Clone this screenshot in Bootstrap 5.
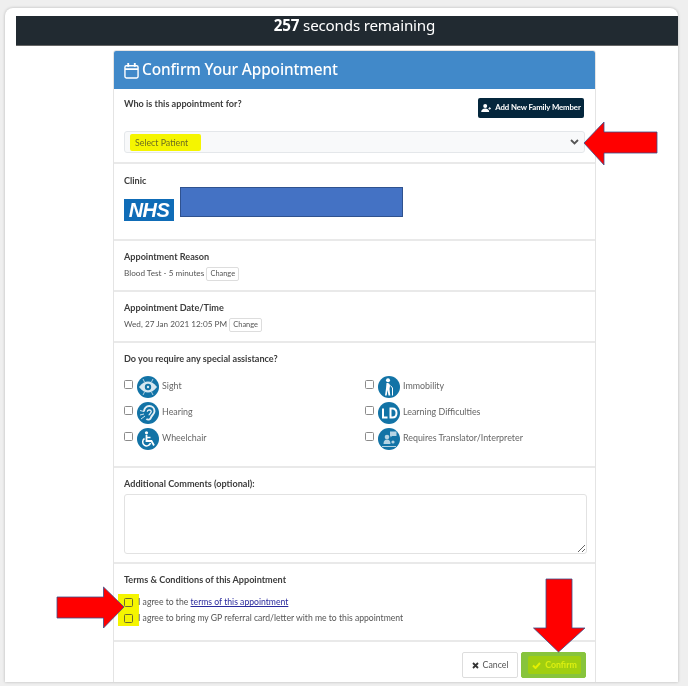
<!DOCTYPE html>
<html lang="en">
<head>
<meta charset="utf-8">
<title>Confirm Your Appointment</title>
<link href="https://cdn.jsdelivr.net/npm/bootstrap@5.3.0/dist/css/bootstrap.min.css" rel="stylesheet">
<style>
html,body{height:686px;overflow:hidden}
body{background:#efefef;font-family:Lato,"Open Sans",sans-serif;font-size:9px;color:#555;position:relative}
.shot-window{position:absolute;left:5px;top:8px;right:10px;height:674px;background:#fff;border-radius:8px 8px 0 0;box-shadow:0 0 3px rgba(0,0,0,.25);padding:8px 0 0 11px;overflow:hidden;filter:blur(.35px)}
.timer-bar{height:30px;background:#212a31;color:#fff;font-family:"Noto Sans",sans-serif;font-size:15.2px;line-height:18px;letter-spacing:-.2px;border-bottom:1px solid #666;padding-left:15px}
.appt-card{width:483px;margin:4px 0 0 97px;border:1px solid #e4e4e4;border-radius:3px 3px 0 0;overflow:visible}
.appt-head{height:38px;background:#4189c9;color:#fff;font-family:"Noto Sans",sans-serif;font-size:15.4px;font-weight:500;letter-spacing:-.12px;border-radius:2px 2px 0 0;padding:0 10px;gap:3px}
.sect{border-bottom:2px solid #e9e9e9;padding:9px 10px 0;position:relative}
.s-who{height:75px;padding-right:11px}.s-clinic{height:77px;padding-top:11px}.s-reason{height:51px;padding-top:10px}.s-date{height:51px;padding-top:10px}.s-help{height:125px;padding-top:10px}.s-notes{height:96px;padding-top:10px}.s-terms{height:78px;padding-top:10px}.s-foot{height:42px;border:0;padding:10px 9px 0;gap:3px}
.sect-label{font-weight:700;color:#3c3c3c;line-height:12px;font-size:9.1px}
.add-btn{height:20px;width:106px;padding:0;background:#04263c;color:#fff;font-size:7.8px;font-weight:700;border-radius:2px;letter-spacing:-.1px;white-space:nowrap}
.add-btn svg{width:10px;height:8px}
.pick-patient{height:22px;margin:13px -1px 0 0;background:#f8f9fa;border:1px solid #e4e7ea;border-radius:3px;padding:0 5px;color:#6d6d20}
.pick-text{background:#f5f500;height:17px;width:71px;padding-left:5px;line-height:17px;border-radius:2px;font-size:8.8px}
.nhs-mark{width:50px;height:22px;background:#0f6cb7;color:#fff;font:italic 700 20px/22px "Liberation Sans",sans-serif;text-align:center;letter-spacing:-.5px;margin-top:12px}
.redact-box{width:223px;height:30px;background:#4472c4;border:1px solid #2f528f;margin-left:6px}
.small-change{height:14px;width:33px;padding:0;font-size:7.4px;line-height:12px;color:#555;background:#fff;border:1px solid #ddd;border-radius:2px;vertical-align:middle}
.val-line{line-height:14px;margin-top:3px;white-space:nowrap;font-size:8.2px}
.tick-box{width:9px;height:9px;margin:0;border:1px solid #8b8b8b;border-radius:1.5px;flex:none;background:#fff;appearance:none;display:block}
.help-row{height:26px;position:relative}
.help-cell{width:241px;flex:none;position:relative;height:26px;color:#666;font-size:8.9px}
.help-cell .tick-box{position:absolute;left:0;top:3px}
.help-ico{position:absolute;top:-1px;left:13px;width:22px;height:22px}
.help-name{position:absolute;left:38px;top:3px;line-height:12px;white-space:nowrap}
.notes-box{display:block;width:463px;height:60px;margin-top:4px;border:1px solid #e2e2e2;border-radius:3px;resize:vertical;background:#fff}
.term-line{display:flex;align-items:center;height:16px;line-height:12px;gap:5px;position:relative;white-space:nowrap;font-size:8.65px}
.term-line .tick-box{background:transparent;border-color:#6b6b30}
.term-line a{color:#2a2a9c}
.terms-list{margin-top:8px;position:relative}
.mark-tick{position:absolute;left:-6px;top:0;width:21px;height:32px;background:#f5f500}
.foot-btn{height:26px;font-size:8.8px;padding:0;border-radius:2px}
.btn-cancel{width:56px;background:#fff;border:1px solid #ddd;color:#555}
.btn-confirm{width:65px;background:#87c43c;border:1px solid #87c43c;padding:3px 4px 3px 6px}
.confirm-glow{background:#a0cf10;color:#dcef10;font-weight:700;height:100%;width:100%;border-radius:2px}
.over-art{position:absolute;left:0;top:0;pointer-events:none}
</style>
</head>
<body>
<div class="shot-window">
  <div class="timer-bar text-center"><strong>257</strong> seconds remaining</div>
  <div class="appt-card">
    <div class="appt-head d-flex align-items-center">
      <svg width="15" height="17" viewBox="0 0 16 18" fill="none" stroke="#fff" stroke-width="1.5"><rect x="1" y="4" width="14" height="13" rx="1.5"/><path d="M1 7.500h14" stroke-width="2"/><path d="M4.500 1v4M11.500 1v4" stroke-width="2"/></svg>
      <span>Confirm Your Appointment</span>
    </div>
    <div class="sect s-who">
      <div class="d-flex justify-content-between">
        <div class="sect-label">Who is this appointment for?</div>
        <button type="button" class="btn add-btn d-flex align-items-center justify-content-center gap-1">
          <svg viewBox="0 0 12 10" fill="#fff"><circle cx="5" cy="2.500" r="2.500"/><path d="M0 10c0-3 2-4.500 5-4.500s5 1.500 5 4.500z"/><path d="M9 5h1.200V3.800h1V5H12.500v1h-1.300v1.200h-1V6H9z"/></svg>
          Add New Family Member
        </button>
      </div>
      <div class="pick-patient d-flex align-items-center justify-content-between">
        <span class="pick-text">Select Patient</span>
        <svg width="9" height="6" viewBox="0 0 9 6" fill="none" stroke="#555" stroke-width="1.800"><path d="M1 1l3.500 3.500L8 1"/></svg>
      </div>
    </div>
    <div class="sect s-clinic">
      <div class="sect-label">Clinic</div>
      <div class="d-flex align-items-start">
        <div class="nhs-mark">NHS</div>
        <div class="redact-box"></div>
      </div>
    </div>
    <div class="sect s-reason">
      <div class="sect-label">Appointment Reason</div>
      <div class="val-line">Blood Test - 5 minutes <button type="button" class="btn small-change">Change</button></div>
    </div>
    <div class="sect s-date">
      <div class="sect-label">Appointment Date/Time</div>
      <div class="val-line">Wed, 27 Jan 2021 12:05 PM <button type="button" class="btn small-change">Change</button></div>
    </div>
    <div class="sect s-help">
      <div class="sect-label">Do you require any special assistance?</div>
      <div class="mt-2 pt-1">
        <div class="help-row d-flex">
          <div class="help-cell"><input type="checkbox" class="tick-box" aria-label="Sight">
            <svg class="help-ico" viewBox="0 0 22 22"><circle cx="11" cy="11" r="11" fill="#1273a6"/><path d="M2 11c3-4 6-5.500 9-5.500s6 1.500 9 5.500c-3 4-6 5.500-9 5.500S5 15 2 11z" fill="#d6e7f0"/><circle cx="11" cy="11" r="3.200" fill="#1273a6"/><circle cx="11" cy="11" r="1.200" fill="#d6e7f0"/><path d="M6 3l1.500 3M16 3l-1.500 3M6 19l1.500-3M16 19l-1.500-3" stroke="#d6e7f0" stroke-width=".8"/></svg>
            <span class="help-name">Sight</span></div>
          <div class="help-cell"><input type="checkbox" class="tick-box" aria-label="Immobility">
            <svg class="help-ico" viewBox="0 0 22 22"><circle cx="11" cy="11" r="11" fill="#1273a6"/><circle cx="10" cy="4.300" r="2" fill="#fff"/><path d="M8.500 7c2-.5 3.500.5 3.500 3l-.5 3 .8 6.500h-1.800l-1-5.500-.8 5.500H7l1-7z" fill="#fff"/><path d="M12.500 9.500l2 2.500v7.500" stroke="#fff" fill="none"/></svg>
            <span class="help-name">Immobility</span></div>
        </div>
        <div class="help-row d-flex">
          <div class="help-cell"><input type="checkbox" class="tick-box" aria-label="Hearing">
            <svg class="help-ico" viewBox="0 0 22 22"><circle cx="11" cy="11" r="11" fill="#1273a6"/><path d="M7 9.500c0-3 2.300-5.500 5.300-5.500s5.200 2.200 5.200 5.200c0 3.300-3 3.800-3.500 6.300-.5 2.300-3.300 2.800-4.500 1.200" fill="none" stroke="#e4eff5" stroke-width="1.900"/><path d="M10.300 9.800c0-2 3.500-2.700 4-.2 0 1.600-2.200 2-2.300 3.700" fill="none" stroke="#e4eff5" stroke-width="1.300"/><path d="M3 8.500l4 1M3 13l4-1M4 17l4-3" stroke="#e4eff5" stroke-width=".9"/></svg>
            <span class="help-name">Hearing</span></div>
          <div class="help-cell"><input type="checkbox" class="tick-box" aria-label="Learning Difficulties">
            <svg class="help-ico" viewBox="0 0 22 22"><circle cx="11" cy="11" r="11" fill="#1273a6"/><path d="M5 6.500v9h4.500M12.500 6.500v9h1.800c3 0 4.200-1.800 4.200-4.500s-1.200-4.500-4.200-4.500z" fill="none" stroke="#fff" stroke-width="2"/></svg>
            <span class="help-name">Learning Difficulties</span></div>
        </div>
        <div class="help-row d-flex">
          <div class="help-cell"><input type="checkbox" class="tick-box" aria-label="Wheelchair">
            <svg class="help-ico" viewBox="0 0 22 22"><circle cx="11" cy="11" r="11" fill="#1273a6"/><circle cx="9.500" cy="4.800" r="1.600" fill="#fff"/><path d="M9.500 7v6h5l2.500 4.500" fill="none" stroke="#fff" stroke-width="1.800"/><path d="M9.500 9.500h4" stroke="#fff" stroke-width="1.400"/><path d="M7.500 10.500a4 4 0 1 0 6 4.500" fill="none" stroke="#fff" stroke-width="1.500"/></svg>
            <span class="help-name">Wheelchair</span></div>
          <div class="help-cell"><input type="checkbox" class="tick-box" aria-label="Requires Translator/Interpreter">
            <svg class="help-ico" viewBox="0 0 22 22"><circle cx="11" cy="11" r="11" fill="#1273a6"/><path d="M12 3.500h6.500v4.500H14l-1.500 1.500V8H12z" fill="#b5d3e3"/><circle cx="9" cy="9" r="2.300" fill="#b5d3e3"/><path d="M5.500 16c0-3 1.200-4.500 3.500-4.500s3.500 1.500 3.500 4.500z" fill="#b5d3e3"/><path d="M4 18.500h14" stroke="#b5d3e3"/><circle cx="15" cy="14" r="1.600" fill="#b5d3e3"/></svg>
            <span class="help-name">Requires Translator/Interpreter</span></div>
        </div>
      </div>
    </div>
    <div class="sect s-notes">
      <label class="sect-label d-block" for="notes">Additional Comments (optional):</label>
      <textarea id="notes" class="notes-box"></textarea>
    </div>
    <div class="sect s-terms">
      <div class="sect-label">Terms &amp; Conditions of this Appointment</div>
      <div class="terms-list">
        <span class="mark-tick"></span>
        <div class="term-line"><input type="checkbox" class="tick-box" aria-label="Agree to terms"><span>I agree to the <a href="#">terms of this appointment</a></span></div>
        <div class="term-line"><input type="checkbox" class="tick-box" aria-label="Agree to bring referral"><span>I agree to bring my GP referral card/letter with me to this appointment</span></div>
      </div>
    </div>
    <div class="sect s-foot d-flex justify-content-end">
      <button type="button" class="btn foot-btn btn-cancel d-flex align-items-center justify-content-center gap-1"><svg width="7" height="7" viewBox="0 0 7 7" stroke="#333" stroke-width="1.800"><path d="M1 1l5 5M6 1L1 6"/></svg>Cancel</button>
      <button type="button" class="btn foot-btn btn-confirm"><span class="confirm-glow d-flex align-items-center justify-content-center gap-1"><svg width="9" height="7" viewBox="0 0 9 7" fill="none" stroke="#e5f000" stroke-width="2"><path d="M1 3.500l2.500 2.500L8 1"/></svg>Confirm</span></button>
    </div>
  </div>
</div>
<svg class="over-art" width="688" height="686" viewBox="0 0 688 686">
  <g fill="#ff0000" stroke="#3a4f8c" stroke-width=".8">
    <polygon points="584,143 604,122 604,132 657,132 657,153 604,153 604,165"/>
    <polygon points="124,607 103.500,587 103.500,597 57,597 57,618 103.500,618 103.500,628"/>
    <polygon points="558.500,652 533.500,628 546,628 546,579 572,579 572,628 585,628"/>
  </g>
</svg>
</body>
</html>
